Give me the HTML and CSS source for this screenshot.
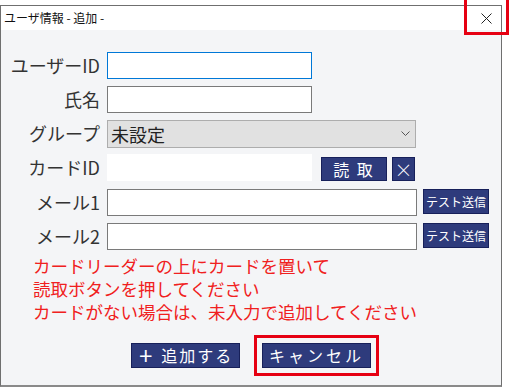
FILE: index.html
```html
<!DOCTYPE html>
<html lang="ja">
<head>
    <meta charset="UTF-8">
    <title>ユーザ情報 - 追加 -</title>
    <link rel="stylesheet" href="styles.css">
</head>
<body>
    <div class="dialog">
        <div class="titlebar">
            <span class="title">ユーザ情報 - 追加 -</span>
            <span class="close">
                <svg width="11" height="11" viewBox="0 0 11 11"><path d="M0.5 0.5L10.5 10.5M10.5 0.5L0.5 10.5" stroke="#222" stroke-width="1"/></svg>
            </span>
        </div>

        <div class="content">
            <div class="row">
                <label class="label">ユーザーID</label>
                <input class="field short focused" type="text">
            </div>
            <div class="row">
                <label class="label">氏名</label>
                <input class="field short" type="text">
            </div>
            <div class="row">
                <label class="label">グループ</label>
                <div class="select">
                    <span>未設定</span>
                    <svg width="9" height="6" viewBox="0 0 9 6"><path d="M0.5 0.5L4.5 4.5L8.5 0.5" fill="none" stroke="#555" stroke-width="1"/></svg>
                </div>
            </div>
            <div class="row card-row">
                <label class="label">カードID</label>
                <div class="card-box"></div>
                <button class="btn read-btn">読&nbsp;取</button>
                <button class="btn clear-btn">×</button>
            </div>
            <div class="row mail-row">
                <label class="label">メール1</label>
                <input class="field long" type="text">
                <button class="btn test-btn">テスト送信</button>
            </div>
            <div class="row">
                <label class="label">メール2</label>
                <input class="field long" type="text">
                <button class="btn test-btn">テスト送信</button>
            </div>

            <p class="notice">
                カードリーダーの上にカードを置いて<br>
                読取ボタンを押してください<br>
                カードがない場合は、未入力で追加してください
            </p>

            <div class="actions">
                <button class="btn action-btn"><span class="plus">＋</span> 追加する</button>
                <button class="btn action-btn cancel">キャンセル</button>
            </div>
        </div>
    </div>

    <div class="close-mark"></div>
</body>
</html>
```

FILE: styles.css
```css
body {
    margin: 0;
    background: #fff;
    font-family: "Noto Sans CJK JP", "Noto Sans", sans-serif;
    position: relative;
    width: 516px;
    height: 391px;
    overflow: hidden;
}

.dialog {
    margin-top: 5px;
    width: 500px;
    border: 1px solid #6f6f6f;
    border-bottom: 2px solid #8a8a8a;
    background: #f4f5f7;
}

.titlebar {
    height: 24px;
    background: #fff;
    display: flex;
    align-items: center;
    justify-content: space-between;
    padding: 0 9px 0 3px;
}

.title {
    font-size: 12px;
    line-height: 24px;
    color: #111;
}

.close {
    display: flex;
}

.content {
    padding: 22px 0 17px 0;
}

.row {
    display: flex;
    align-items: center;
    height: 27px;
    margin-bottom: 7px;
}

.card-row {
    margin-bottom: 8px;
}

.label {
    width: 99px;
    text-align: right;
    font-size: 18px;
    color: #333;
    margin-right: 7px;
    line-height: 27px;
}

.field {
    box-sizing: border-box;
    height: 27px;
    border: 1px solid #7a7a7a;
    background: #fff;
    margin: 0;
    padding: 0 4px;
}

.short {
    width: 205px;
}

.long {
    width: 310px;
    margin-right: 6px;
}

.focused {
    border-color: #0078d7;
}

.select {
    box-sizing: border-box;
    width: 309px;
    height: 28px;
    border: 1px solid #adadad;
    background: #e1e1e1;
    display: flex;
    align-items: center;
    justify-content: space-between;
    padding: 0 5px 0 3px;
    font-size: 18px;
    color: #222;
}

.card-box {
    width: 205px;
    height: 27px;
    background: #fff;
    margin-right: 9px;
}

.btn {
    box-sizing: border-box;
    margin: 0;
    padding: 0;
    border: 1px solid #17205a;
    background: #2e3b7c;
    color: #fff;
    font-family: "Noto Sans CJK JP", "Noto Sans", sans-serif;
    cursor: pointer;
}

.read-btn {
    width: 66px;
    height: 24px;
    margin-top: 3px;
    font-size: 16px;
    line-height: 20px;
    letter-spacing: 2px;
    margin-right: 5px;
}

.clear-btn {
    width: 23px;
    height: 24px;
    margin-top: 3px;
    font-size: 18px;
    line-height: 20px;
    font-weight: 300;
}

.test-btn {
    width: 66px;
    height: 25px;
    align-self: flex-start;
    font-size: 12px;
    line-height: 21px;
}

.notice {
    margin: -3px 0 0 32px;
    color: #f02020;
    font-size: 17.5px;
    line-height: 23px;
}

.actions {
    display: flex;
    justify-content: center;
    gap: 22px;
    margin-top: 20px;
}

.action-btn {
    width: 109px;
    height: 25px;
    font-size: 16px;
    line-height: 21px;
    letter-spacing: 2px;
}

.plus {
    font-weight: 700;
}

.cancel {
    outline: 3px solid #e60012;
    outline-offset: 5px;
    letter-spacing: 3px;
}

.close-mark {
    position: absolute;
    left: 464px;
    top: -3px;
    width: 39px;
    height: 32px;
    border: 3px solid #e60012;
}
```
